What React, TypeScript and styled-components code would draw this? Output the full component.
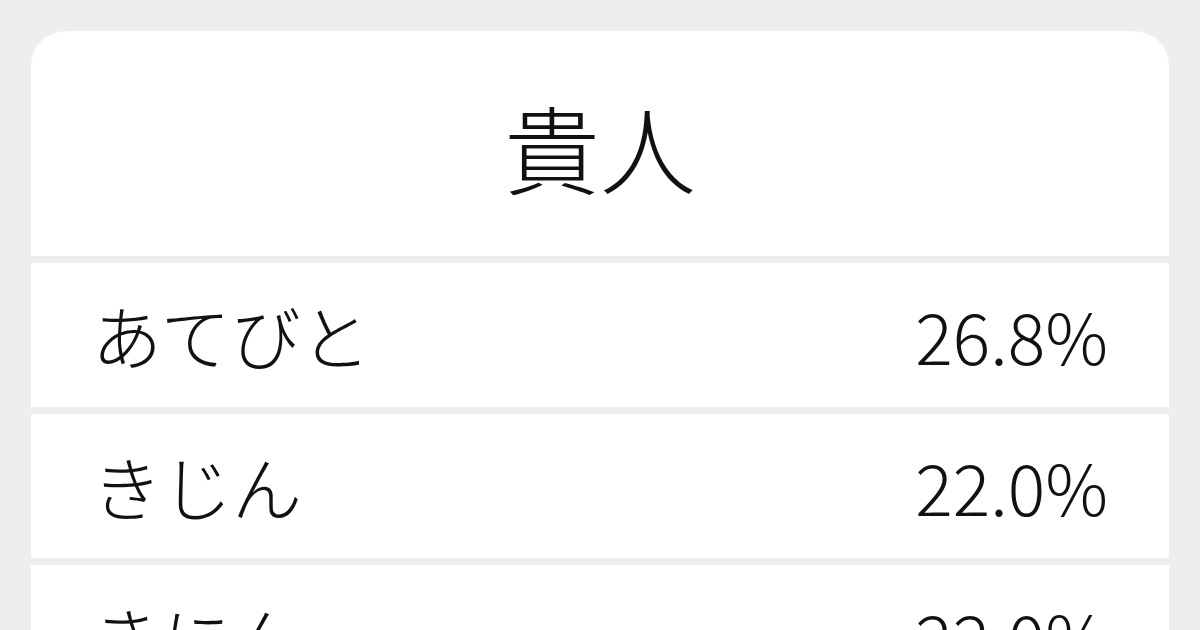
import React from "react";
import styled, { createGlobalStyle } from "styled-components";

const Global = createGlobalStyle`
  html, body { margin: 0; padding: 0; background: #eeeeee; }
  body { font-family: "Noto Sans CJK JP", "Noto Sans", sans-serif; color: #111; }
`;

const Page = styled.div`
  width: 1200px;
  height: 630px;
  overflow: hidden;
  box-sizing: border-box;
  padding: 31px 31px 0 31px;
  background: #eeeeee;
`;

const Card = styled.div`
  display: flex;
  flex-direction: column;
  gap: 7px;
  border-radius: 35px 35px 0 0;
  overflow: hidden;
  background: #eeeeee;
`;

const Title = styled.div`
  height: 225px;
  background: #fff;
  display: flex;
  align-items: center;
  justify-content: center;
  font-size: 96px;
  font-weight: 300;
  line-height: 1;
  padding-top: 4px;
  box-sizing: border-box;
`;

const Row = styled.div`
  height: 144px;
  flex-shrink: 0;
  background: #fff;
  display: flex;
  align-items: center;
  justify-content: space-between;
  padding: 0 61px 0 61px;
  font-size: 70px;
  font-weight: 300;
  line-height: 1;
`;

const rows = [
  ["あてびと", "26.8%"],
  ["きじん", "22.0%"],
  ["きにん", "22.0%"],
];

export default function App() {
  return (
    <Page>
      <Global />
      <Card>
        <Title>貴人</Title>
        {rows.map(([r, p]) => (
          <Row key={r}>
            <span>{r}</span>
            <span>{p}</span>
          </Row>
        ))}
      </Card>
    </Page>
  );
}
